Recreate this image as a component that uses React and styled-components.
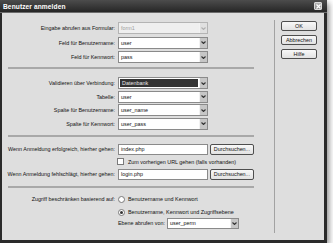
import React from 'react';
import styled, { createGlobalStyle } from 'styled-components';

const GlobalStyle = createGlobalStyle`
    html, body {
        margin: 0;
        padding: 0;
        background: #ffffff;
    }
    body {
        font-family: "Liberation Sans", Arial, sans-serif;
    }
    * {
        box-sizing: border-box;
    }
`

const Window = styled.div`
    width: 327px;
    height: 243px;
    display: flex;
    flex-direction: column;
    background: #dedede;
    box-shadow: 2px 3px 6px rgba(0, 0, 0, 0.45);
`

const TitleBar = styled.div`
    height: 13px;
    flex-shrink: 0;
    display: flex;
    align-items: center;
    justify-content: space-between;
    padding: 0 5px 0 3px;
    background: linear-gradient(#4c4c4c, #262626);
    border-bottom: 1px solid #6c6c6c;
    color: #ffffff;
    font-size: 6.6px;
    font-weight: bold;
    letter-spacing: 0.1px;
`

const CloseButton = styled.div`
    width: 8px;
    height: 8px;
    display: flex;
    align-items: center;
    justify-content: center;
    background: linear-gradient(#b4b4b4, #8a8a8a);
    border: 1px solid #d8d8d8;
    border-radius: 1px;
`

const Body = styled.div`
    flex: 1;
    display: flex;
    border-style: solid;
    border-color: #2a2a2a;
    border-width: 0 3px 3px 2px;
`

const Main = styled.div`
    width: 272px;
    flex-shrink: 0;
    display: flex;
    flex-direction: column;
    padding-top: 9px;
`

const Divider = styled.div`
    width: 1px;
    margin: 7px 0;
    background: #a2a2a2;
`

const Side = styled.div`
    flex: 1;
    display: flex;
    flex-direction: column;
    gap: 4px;
    padding: 8px 0 0 6px;
`

const Button = styled.div`
    width: ${props => props.$width || 36}px;
    height: ${props => props.$height || 10}px;
    display: flex;
    align-items: center;
    justify-content: center;
    flex-shrink: 0;
    border: 1px solid #4e4e4e;
    border-radius: 2px;
    background: linear-gradient(#f8f8f8, #e2e2e2);
    font-size: 5.4px;
    color: #111;
`

const Block = styled.div`
    display: flex;
    flex-direction: column;
    gap: ${props => props.$gap}px;
    margin-top: ${props => props.$top || 0}px;
`

const Row = styled.div`
    display: grid;
    grid-template-columns: 113px 1fr;
    column-gap: 3px;
    align-items: center;
    height: ${props => props.$h}px;
    margin-top: ${props => props.$top || 0}px;
`

const Label = styled.div`
    text-align: right;
    white-space: nowrap;
    font-size: 5.4px;
    color: #111;
`

const Field = styled.div`
    display: flex;
    align-items: center;
    gap: ${props => props.$gap || 2}px;
    height: 100%;
    font-size: 5.4px;
    color: #111;
    white-space: nowrap;
`

const Separator = styled.div`
    height: 2px;
    width: 246px;
    margin-left: 6px;
    margin-top: ${props => props.$top}px;
    background: #a8a8a8;
`

const SelectBox = styled.div`
    width: ${props => props.$width || 90}px;
    height: 100%;
    display: flex;
    border: 1px solid ${props => props.$disabled ? '#b4b4b4' : '#8a8a8a'};
    background: ${props => props.$disabled ? '#efefef' : '#ffffff'};
`

const SelectText = styled.div`
    flex: 1;
    display: flex;
    align-items: center;
    padding-left: 2px;
    margin: ${props => props.$highlight ? '1px' : '0'};
    background: ${props => props.$highlight ? '#333333' : 'transparent'};
    color: ${props => props.$disabled ? '#a0a0a0' : props.$highlight ? '#e8e8e8' : '#111'};
    font-size: 5.4px;
`

const Arrow = styled.div`
    width: 8px;
    display: flex;
    align-items: center;
    justify-content: center;
    background: ${props => props.$disabled ? '#e0e0e0' : '#c6c6c6'};
    border-left: 1px solid #f2f2f2;
`

const TextInput = styled.div`
    width: 90px;
    height: 11px;
    display: flex;
    align-items: center;
    padding-left: 2px;
    border: 1px solid #8a8a8a;
    background: #ffffff;
    font-size: 5.4px;
    color: #111;
`

const Checkbox = styled.div`
    width: 7px;
    height: 7px;
    margin-left: -1px;
    border: 1px solid #7a7a7a;
    background: #ffffff;
`

const Radio = styled.div`
    width: 7px;
    height: 7px;
    display: flex;
    align-items: center;
    justify-content: center;
    border: 1px solid #7a7a7a;
    border-radius: 50%;
    background: #ffffff;

    &::after {
        content: '';
        display: ${props => props.$checked ? 'block' : 'none'};
        width: 3px;
        height: 3px;
        border-radius: 50%;
        background: #333333;
    }
`

const Chevron = ({ disabled }) => (
    <svg width="5" height="3" viewBox="0 0 5 3">
        <polyline points="0.5,0.5 2.5,2.5 4.5,0.5" fill="none" stroke={disabled ? '#b0b0b0' : '#333'} strokeWidth="1.1" />
    </svg>
)

const Select = ({ value, width, disabled, highlight }) => (
    <SelectBox $width={width} $disabled={disabled}>
        <SelectText $disabled={disabled} $highlight={highlight}>{value}</SelectText>
        <Arrow $disabled={disabled}><Chevron disabled={disabled} /></Arrow>
    </SelectBox>
)

const App = () => {
    return (
        <>
            <GlobalStyle />
            <Window>
                <TitleBar>
                    <span>Benutzer anmelden</span>
                    <CloseButton>
                        <svg width="5" height="5" viewBox="0 0 5 5">
                            <path d="M0.5 0.5 L4.5 4.5 M4.5 0.5 L0.5 4.5" stroke="#fff" strokeWidth="1.2" />
                        </svg>
                    </CloseButton>
                </TitleBar>
                <Body>
                    <Main>
                        <Block $gap={2.5}>
                            <Row $h={12}>
                                <Label>Eingabe abrufen aus Formular:</Label>
                                <Field><Select value="form1" disabled /></Field>
                            </Row>
                            <Row $h={12}>
                                <Label>Feld für Benutzername:</Label>
                                <Field><Select value="user" /></Field>
                            </Row>
                            <Row $h={12}>
                                <Label>Feld für Kennwort:</Label>
                                <Field><Select value="pass" /></Field>
                            </Row>
                        </Block>
                        <Separator $top={4} />
                        <Block $gap={1.5} $top={8}>
                            <Row $h={12}>
                                <Label>Validieren über Verbindung:</Label>
                                <Field><Select value="Datenbank" highlight /></Field>
                            </Row>
                            <Row $h={12}>
                                <Label>Tabelle:</Label>
                                <Field><Select value="user" /></Field>
                            </Row>
                            <Row $h={12}>
                                <Label>Spalte für Benutzername:</Label>
                                <Field><Select value="user_name" /></Field>
                            </Row>
                            <Row $h={12}>
                                <Label>Spalte für Kennwort:</Label>
                                <Field><Select value="user_pass" /></Field>
                            </Row>
                        </Block>
                        <Separator $top={5.5} />
                        <Block $gap={1.5} $top={6}>
                            <Row $h={12}>
                                <Label>Wenn Anmeldung erfolgreich, hierher gehen:</Label>
                                <Field>
                                    <TextInput>index.php</TextInput>
                                    <Button $width={44} $height={11}>Durchsuchen...</Button>
                                </Field>
                            </Row>
                            <Row $h={10}>
                                <span />
                                <Field $gap={4}>
                                    <Checkbox />
                                    <span>Zum vorherigen URL gehen (falls vorhanden)</span>
                                </Field>
                            </Row>
                            <Row $h={12}>
                                <Label>Wenn Anmeldung fehlschlägt, hierher gehen:</Label>
                                <Field>
                                    <TextInput>login.php</TextInput>
                                    <Button $width={44} $height={11}>Durchsuchen...</Button>
                                </Field>
                            </Row>
                        </Block>
                        <Separator $top={6} />
                        <Block $gap={2} $top={5.5}>
                            <Row $h={11}>
                                <Label>Zugriff beschränken basierend auf:</Label>
                                <Field $gap={3}>
                                    <Radio />
                                    <span>Benutzername und Kennwort</span>
                                </Field>
                            </Row>
                            <Row $h={11}>
                                <span />
                                <Field $gap={3}>
                                    <Radio $checked />
                                    <span>Benutzername, Kennwort und Zugriffsebene</span>
                                </Field>
                            </Row>
                            <Row $h={11} $top={-2}>
                                <span />
                                <Field>
                                    <span>Ebene abrufen von:</span>
                                    <Select value="user_perm" width={72} />
                                </Field>
                            </Row>
                        </Block>
                    </Main>
                    <Divider />
                    <Side>
                        <Button>OK</Button>
                        <Button>Abbrechen</Button>
                        <Button>Hilfe</Button>
                    </Side>
                </Body>
            </Window>
        </>
    )
}

export default App
